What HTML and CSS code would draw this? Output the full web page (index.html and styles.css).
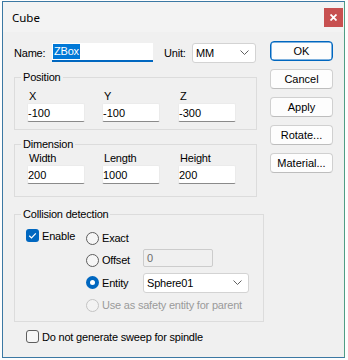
FILE: index.html
```html
<!DOCTYPE html>
<html lang="en">

<head>
  <meta charset="UTF-8">
  <meta name="viewport" content="width=device-width, initial-scale=1.0">
  <title>Cube</title>

  <link rel="stylesheet" href="styles.css">

</head>

<body>
  <div class="window">
    <div class="titlebar">
      <span class="title">Cube</span>
      <span class="close-button">
        <svg width="7" height="7" viewBox="0 0 7 7">
          <path d="M0.5 0.5 L6.5 6.5 M6.5 0.5 L0.5 6.5" stroke="#fff" stroke-width="1.8" />
        </svg>
      </span>
    </div>

    <div class="content">
      <div class="main">
        <!-- name / unit -->
        <div class="top-row">
          <span class="label name-label">Name:</span>
          <div class="name-field"><span class="selected">ZBox</span></div>
          <span class="label unit-label">Unit:</span>
          <div class="select unit-select">
            <span>MM</span>
            <svg class="chevron" width="9" height="5" viewBox="0 0 9 5">
              <polyline points="0.5,0.5 4.5,4.5 8.5,0.5" fill="none" stroke="#606060" />
            </svg>
          </div>
        </div>

        <fieldset class="group position-group">
          <legend>Position</legend>
          <div class="group-body coords position-body">
            <div class="coord"><span class="coord-label">X</span><input class="textbox" value="-100"></div>
            <div class="coord"><span class="coord-label">Y</span><input class="textbox" value="-100"></div>
            <div class="coord"><span class="coord-label">Z</span><input class="textbox" value="-300"></div>
          </div>
        </fieldset>

        <fieldset class="group dimension-group">
          <legend>Dimension</legend>
          <div class="group-body coords dimension-body">
            <div class="coord"><span class="coord-label">Width</span><input class="textbox" value="200"></div>
            <div class="coord"><span class="coord-label">Length</span><input class="textbox" value="1000"></div>
            <div class="coord"><span class="coord-label">Height</span><input class="textbox" value="200"></div>
          </div>
        </fieldset>

        <fieldset class="group collision-group">
          <legend>Collision detection</legend>
          <div class="group-body collision-body">
            <div class="check-item enable-item">
              <span class="checkbox checked">
                <svg width="13" height="13" viewBox="0 0 13 13">
                  <polyline points="3.2,6.8 5.5,9 9.8,4.3" fill="none" stroke="#fff" stroke-width="1.2" />
                </svg>
              </span>
              <span>Enable</span>
            </div>

            <div class="radios">
              <div class="radio-row row-exact">
                <span class="radio"></span>
                <span class="radio-text">Exact</span>
              </div>
              <div class="radio-row row-offset">
                <span class="radio"></span>
                <span class="radio-text">Offset</span>
                <div class="offset-field">0</div>
              </div>
              <div class="radio-row row-entity">
                <span class="radio checked"></span>
                <span class="radio-text">Entity</span>
                <div class="select entity-select">
                  <span>Sphere01</span>
                  <svg class="chevron" width="9" height="5" viewBox="0 0 9 5">
                    <polyline points="0.5,0.5 4.5,4.5 8.5,0.5" fill="none" stroke="#606060" />
                  </svg>
                </div>
              </div>
              <div class="radio-row row-safety disabled">
                <span class="radio"></span>
                <span>Use as safety entity for parent</span>
              </div>
            </div>
          </div>
        </fieldset>

        <div class="check-item sweep-item">
          <span class="checkbox"></span>
          <span>Do not generate sweep for spindle</span>
        </div>
      </div>

      <!-- buttons -->
      <div class="side">
        <button class="button default">OK</button>
        <button class="button">Cancel</button>
        <button class="button">Apply</button>
        <button class="button">Rotate...</button>
        <button class="button">Material...</button>
      </div>
    </div>
  </div>
</body>

</html>
```

FILE: styles.css
```css
/* reset */
* {
  box-sizing: border-box;
}

html,
body,
fieldset,
legend,
button,
input {
  margin: 0;
  padding: 0;
}

/* style */
body {
  width: 348px;
  height: 360px;
  background-color: #fdfdfd;
  font-family: "Liberation Sans", Arial, sans-serif;
  font-size: 11px;
  letter-spacing: -0.2px;
  color: #000;
}

.window {
  margin: 1px 0 0 2px;
  width: 343px;
  height: 357px;
  border: 1px solid #3b78a3;
  border-right-color: #4f9d84;
  background-color: #f0f0f0;
}

/* title bar */
.titlebar {
  height: 30px;
  display: flex;
  align-items: center;
  justify-content: space-between;
  padding: 0 1px 0 9px;
  background-color: #f3f3f3;
}

.title {
  font-family: "Noto Sans", sans-serif;
  font-size: 11.5px;
  letter-spacing: 0;
}

.close-button {
  width: 19px;
  height: 19px;
  display: flex;
  align-items: center;
  justify-content: center;
  background-color: #c75050;
}

/* content */
.content {
  display: flex;
  padding: 9px 0 0 11px;
}

.main {
  width: 250px;
  margin-top: 1px;
}

.side {
  margin-left: 6px;
  display: flex;
  flex-direction: column;
  gap: 8px;
}

.top-row {
  height: 21px;
  display: flex;
  align-items: center;
}

.name-label {
  width: 38px;
}

.name-field {
  width: 101px;
  height: 19px;
  padding: 1px 0 0 1px;
  background-color: #fff;
  border-bottom: 2px solid #0067c0;
}

.selected {
  display: inline-block;
  line-height: 15px;
  padding: 0 1px;
  background-color: #0078d7;
  color: #fff;
}

.unit-label {
  width: 28px;
  margin-left: 11px;
}

.select {
  height: 20px;
  display: flex;
  align-items: center;
  justify-content: space-between;
  padding: 0 6px 0 3px;
  background-color: #fff;
  border: 1px solid #d3d3d3;
  border-radius: 3px;
}

.unit-select {
  width: 64px;
}

.chevron {
  display: block;
}

/* groups */
.group {
  border: 1px solid #dcdcdc;
  min-width: 0;
}

.group legend {
  margin-left: 6px;
  padding: 0 2px;
  line-height: 13px;
}

.position-group,
.dimension-group {
  width: 243px;
  margin-top: 8px;
}

.collision-group {
  width: 250px;
  margin-top: 11px;
}

.coords {
  display: grid;
  grid-template-columns: 75px 76px 58px;
  padding-left: 12px;
}

.position-body {
  padding-top: 5px;
  padding-bottom: 7px;
}

.dimension-body {
  padding-top: 0;
  padding-bottom: 12px;
}

.coord {
  display: flex;
  flex-direction: column;
}

.coord-label {
  line-height: 14px;
  padding-left: 2px;
}

.textbox {
  width: 58px;
  height: 19px;
  padding: 0 1px 0 0;
  font: inherit;
  color: #000;
  background-color: #fff;
  border: 1px solid #ebebeb;
  border-bottom-color: #8a8a8a;
  border-radius: 2px;
  outline: none;
}

/* collision */
.collision-body {
  display: flex;
  padding: 6px 0 5px 11px;
}

.check-item {
  display: flex;
  align-items: center;
  gap: 3px;
  height: 13px;
}

.enable-item {
  width: 60px;
  margin-top: 2px;
}

.checkbox {
  width: 13px;
  height: 13px;
  border: 1px solid #5e5e5e;
  border-radius: 3px;
  background-color: #f6f6f6;
}

.checkbox.checked {
  border: none;
  background-color: #0067c0;
}

.checkbox svg {
  display: block;
}

.radios {
  display: flex;
  flex-direction: column;
}

.radio-row {
  height: 22px;
  display: flex;
  align-items: center;
}

.row-entity {
  height: 23px;
}

.row-offset .offset-field {
  align-self: flex-start;
}

.radio {
  width: 13px;
  height: 13px;
  margin-right: 3px;
  border: 1px solid #5e5e5e;
  border-radius: 50%;
  background-color: #f6f6f6;
  flex-shrink: 0;
}

.radio.checked {
  border: none;
  background-color: #0067c0;
  position: relative;
}

.radio.checked::after {
  content: "";
  position: absolute;
  left: 4px;
  top: 4px;
  width: 5px;
  height: 5px;
  border-radius: 50%;
  background-color: #fff;
}

.radio-text {
  width: 41px;
}

.offset-field {
  width: 70px;
  height: 18px;
  padding-left: 3px;
  line-height: 16px;
  color: #6d6d6d;
  background-color: #f0f0f0;
  border: 1px solid #cccccc;
  border-radius: 2px;
}

.entity-select {
  width: 106px;
}

.disabled {
  color: #9a9a9a;
}

.disabled .radio {
  border-color: #c4c4c4;
  background-color: #f3f3f3;
}

.sweep-item {
  margin-top: 8px;
  padding-left: 12px;
}

/* buttons */
.button {
  width: 63px;
  height: 20px;
  font: inherit;
  color: #000;
  background-color: #fdfdfd;
  border: 1px solid #d0d0d0;
  border-bottom-color: #bdbdbd;
  border-radius: 4px;
}

.button.default {
  border-color: #0067c0;
  box-shadow: inset 0 0 0 0.5px #0067c0;
}
```
